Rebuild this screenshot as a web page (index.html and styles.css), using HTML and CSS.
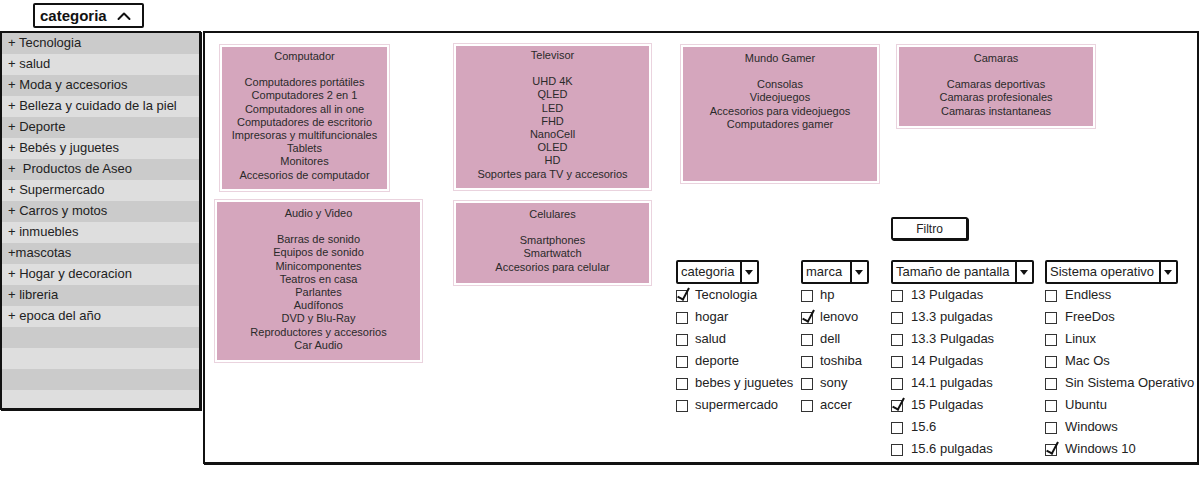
FILE: index.html
```html
<!DOCTYPE html>
<html lang="es">
<head>
  <meta charset="UTF-8" />
  <title>Categorias</title>
  <link rel="stylesheet" href="styles.css">
</head>
<body>

  <button class="cat-toggle">categoria
    <svg class="caret" width="14" height="10" viewBox="0 0 14 10"><path d="M1.5 8 L7 2.5 L12.5 8" fill="none" stroke="#111" stroke-width="2" stroke-linecap="round" stroke-linejoin="round"/></svg>
  </button>

  <div class="layout">

    <ul class="sidebar">
      <li>+ Tecnologia</li>
      <li>+ salud</li>
      <li>+ Moda y accesorios</li>
      <li>+ Belleza y cuidado de la piel</li>
      <li>+ Deporte</li>
      <li>+ Bebés y juguetes</li>
      <li>+ &nbsp;Productos de Aseo</li>
      <li>+ Supermercado</li>
      <li>+ Carros y motos</li>
      <li>+ inmuebles</li>
      <li>+mascotas</li>
      <li>+ Hogar y decoracion</li>
      <li>+ libreria</li>
      <li>+ epoca del año</li>
      <li></li>
      <li></li>
      <li></li>
      <li></li>
    </ul>

    <main class="panel">

      <div class="col col-a">
        <section class="card card-comp">
          <h3>Computador</h3>
          <p>Computadores portátiles<br>Computadores 2 en 1<br>Computadores all in one<br>Computadores de escritorio<br>Impresoras y multifuncionales<br>Tablets<br>Monitores<br>Accesorios de computador</p>
        </section>
        <section class="card card-audio">
          <h3>Audio y Video</h3>
          <p>Barras de sonido<br>Equipos de sonido<br>Minicomponentes<br>Teatros en casa<br>Parlantes<br>Audífonos<br>DVD y Blu-Ray<br>Reproductores y accesorios<br>Car Audio</p>
        </section>
      </div>

      <div class="col col-b">
        <section class="card card-tv">
          <h3>Televisor</h3>
          <p>UHD 4K<br>QLED<br>LED<br>FHD<br>NanoCell<br>OLED<br>HD<br>Soportes para TV y accesorios</p>
        </section>
        <section class="card card-cel">
          <h3>Celulares</h3>
          <p>Smartphones<br>Smartwatch<br>Accesorios para celular</p>
        </section>
      </div>

      <div class="col col-c">
        <div class="top-cards">
          <section class="card card-gamer">
            <h3>Mundo Gamer</h3>
            <p>Consolas<br>Videojuegos<br>Accesorios para videojuegos<br>Computadores gamer</p>
          </section>
          <section class="card card-cam">
            <h3>Camaras</h3>
            <p>Camaras deportivas<br>Camaras profesionales<br>Camaras instantaneas</p>
          </section>
        </div>

        <button class="filter-btn">Filtro</button>

        <div class="filters">
          <div class="fgroup fg-cat">
            <div class="dropdown dd-cat"><span class="dd-label">categoria</span><span class="dd-arrow"></span></div>
            <ul class="checklist">
              <li class="checked"><span class="box"></span>Tecnologia</li>
              <li><span class="box"></span>hogar</li>
              <li><span class="box"></span>salud</li>
              <li><span class="box"></span>deporte</li>
              <li><span class="box"></span>bebes y juguetes</li>
              <li><span class="box"></span>supermercado</li>
            </ul>
          </div>
          <div class="fgroup fg-marca">
            <div class="dropdown dd-marca"><span class="dd-label">marca</span><span class="dd-arrow"></span></div>
            <ul class="checklist">
              <li><span class="box"></span>hp</li>
              <li class="checked"><span class="box"></span>lenovo</li>
              <li><span class="box"></span>dell</li>
              <li><span class="box"></span>toshiba</li>
              <li><span class="box"></span>sony</li>
              <li><span class="box"></span>accer</li>
            </ul>
          </div>
          <div class="fgroup fg-size">
            <div class="dropdown dd-size"><span class="dd-label">Tamaño de pantalla</span><span class="dd-arrow"></span></div>
            <ul class="checklist">
              <li><span class="box"></span>13 Pulgadas</li>
              <li><span class="box"></span>13.3 pulgadas</li>
              <li><span class="box"></span>13.3 Pulgadas</li>
              <li><span class="box"></span>14 Pulgadas</li>
              <li><span class="box"></span>14.1 pulgadas</li>
              <li class="checked"><span class="box"></span>15 Pulgadas</li>
              <li><span class="box"></span>15.6</li>
              <li><span class="box"></span>15.6 pulgadas</li>
            </ul>
          </div>
          <div class="fgroup fg-os">
            <div class="dropdown dd-os"><span class="dd-label">Sistema operativo</span><span class="dd-arrow"></span></div>
            <ul class="checklist">
              <li><span class="box"></span>Endless</li>
              <li><span class="box"></span>FreeDos</li>
              <li><span class="box"></span>Linux</li>
              <li><span class="box"></span>Mac Os</li>
              <li><span class="box"></span>Sin Sistema Operativo</li>
              <li><span class="box"></span>Ubuntu</li>
              <li><span class="box"></span>Windows</li>
              <li class="checked"><span class="box"></span>Windows 10</li>
            </ul>
          </div>
        </div>
      </div>

    </main>
  </div>

</body>
</html>
```

FILE: styles.css
```css
:root {
  --ink: #111;
  --text: #222;
  --card: #d5a6bd;
  --card-edge: #ead3de;
  --row-dark: #cbcbcb;
  --row-light: #dedede;
}

* {
  box-sizing: border-box;
}

body {
  margin: 0;
  width: 1199px;
  height: 479px;
  overflow: hidden;
  background: #fff;
  color: var(--text);
  font-family: 'Liberation Sans', Arial, sans-serif;
}

/* top toggle */
.cat-toggle {
  display: flex;
  align-items: center;
  gap: 10px;
  margin: 3px 0 0 33px;
  width: 111px;
  height: 25px;
  padding: 0 0 0 5px;
  background: #fff;
  border: 2px solid var(--ink);
  border-radius: 2px;
  font-family: 'Liberation Sans', Arial, sans-serif;
  font-size: 15px;
  font-weight: bold;
  color: var(--ink);
}

.caret {
  margin-top: 1px;
}

.layout {
  display: flex;
  gap: 2px;
  margin-top: 3px;
}

/* sidebar */
.sidebar {
  list-style: none;
  margin: 0;
  padding: 0;
  width: 201px;
  height: 379px;
  overflow: hidden;
  border: 2px solid var(--ink);
  box-shadow: 1px 1px 0 var(--ink);
}

.sidebar li {
  height: 21px;
  line-height: 20px;
  padding-left: 6px;
  font-size: 13px;
  white-space: nowrap;
  background: var(--row-light);
}

.sidebar li:nth-child(odd) {
  background: var(--row-dark);
}

/* main panel */
.panel {
  display: flex;
  width: 996px;
  height: 433px;
  padding: 11px 0 0 10px;
  border: 2px solid var(--ink);
  box-shadow: 1px 1px 0 var(--ink);
}

.col-a {
  width: 207px;
}

.col-b {
  width: 197px;
  margin-left: 32px;
}

.col-c {
  margin-left: 25px;
  flex: 1;
}

.card {
  background: var(--card);
  border: 2px solid #fff;
  box-shadow: 0 0 0 1px var(--card-edge);
  text-align: center;
  font-size: 11px;
  line-height: 13.2px;
  color: #2a2a2a;
  padding-top: 3px;
}

.card h3 {
  margin: 0 0 13px;
  font-size: 11px;
  font-weight: normal;
}

.card p {
  margin: 0;
}

.card-comp {
  width: 169px;
  height: 146px;
  margin: 1px 0 0 5px;
}

.card-audio {
  width: 207px;
  height: 162px;
  margin-top: 9px;
  padding-top: 5px;
}

.card-tv {
  height: 146px;
}

.card-cel {
  height: 84px;
  margin-top: 11px;
  padding-top: 5px;
}

.top-cards {
  display: flex;
  align-items: flex-start;
  margin-left: 5px;
  margin-top: 1px;
}

.card-gamer {
  width: 198px;
  height: 138px;
  padding-top: 5px;
}

.card-cam {
  width: 198px;
  height: 83px;
  margin-left: 18px;
  padding-top: 5px;
}

/* filters */
.filter-btn {
  display: block;
  margin: 34px 0 0 215px;
  width: 77px;
  height: 23px;
  background: #fff;
  border: 2px solid var(--ink);
  box-shadow: 1px 1px 0 var(--ink);
  border-radius: 2px;
  font-family: 'Liberation Sans', Arial, sans-serif;
  font-size: 12px;
  color: var(--text);
  padding: 0;
}

.filters {
  display: flex;
  margin-top: 20px;
}

.fg-cat { width: 125px; }
.fg-marca { width: 90px; }
.fg-size { width: 154px; }

.dropdown {
  display: flex;
  height: 24px;
  border: 2px solid var(--ink);
  border-radius: 2px;
  background: #fff;
  font-size: 13px;
}

.dd-cat { width: 83px; }
.dd-marca { width: 68px; }
.dd-size { width: 143px; }
.dd-os { width: 133px; }

.dd-label {
  flex: 1;
  padding-left: 3px;
  line-height: 20px;
  white-space: nowrap;
  overflow: hidden;
}

.dd-arrow {
  position: relative;
  width: 17px;
  border-left: 2px solid var(--ink);
}

.dd-arrow::after {
  content: "";
  position: absolute;
  left: 3px;
  top: 8px;
  border-left: 4.5px solid transparent;
  border-right: 4.5px solid transparent;
  border-top: 5px solid var(--ink);
}

.checklist {
  list-style: none;
  margin: 0;
  padding: 0;
}

.checklist li {
  display: flex;
  align-items: center;
  height: 22px;
  line-height: 20px;
  font-size: 13px;
  white-space: nowrap;
}

.box {
  position: relative;
  flex: none;
  width: 12px;
  height: 12px;
  margin: 2px 7px 0 0;
  border: 1.5px solid #333;
}

.fg-size .box,
.fg-os .box {
  margin-right: 8px;
}

.checked .box::after {
  content: "";
  position: absolute;
  left: 3px;
  top: -5px;
  width: 5px;
  height: 12px;
  border-right: 2px solid #111;
  border-bottom: 2px solid #111;
  transform: rotate(28deg);
}
```
